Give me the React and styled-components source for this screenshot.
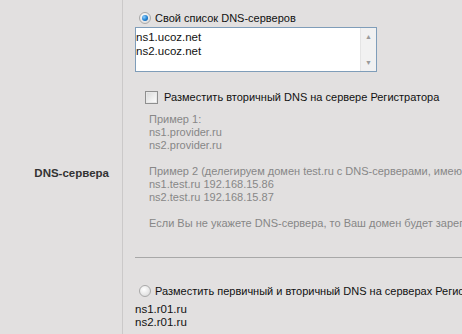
import React from 'react';
import styled, { createGlobalStyle } from 'styled-components';

const Global = createGlobalStyle`
    html, body {
        margin: 0;
        padding: 0;
        background: #e2e0e0;
        overflow: hidden;
    }
    body {
        font: 11px "Liberation Sans", Arial, sans-serif;
        color: #111;
    }
`;

const Row = styled.div`
    display: flex;
    width: 462px;
    height: 346px;
    white-space: nowrap;
`;

const LabelCell = styled.div`
    width: 123px;
    flex: none;
    display: flex;
    align-items: center;
    justify-content: flex-end;
    box-sizing: border-box;
    padding-right: 13px;
    border-right: 1px solid #cbc9c9;
    font-weight: bold;
    font-size: 11.5px;
    color: #333;
`;

const FieldCell = styled.div`
    flex: 1;
    min-width: 0;
    padding: 12px 0 0 12px;
    overflow: hidden;
    font-size: 11px;
`;

const Option = styled.label`
    display: flex;
    align-items: center;
    gap: ${p => p.$gap || 4}px;
    height: 12px;
    padding-left: ${p => p.$indent || 4}px;
    line-height: 12px;
`;

const Radio = styled.span`
    width: 12px;
    height: 12px;
    flex: none;
    box-sizing: border-box;
    border-radius: 50%;
    border: 1px solid #a9a9a9;
    background: radial-gradient(circle at 40% 35%, #fff 0%, #e6e6e6 60%, #cfcfcf 100%);
    display: flex;
    align-items: center;
    justify-content: center;

    &::after {
        content: '';
        display: ${p => (p.$checked ? 'block' : 'none')};
        width: 6px;
        height: 6px;
        border-radius: 50%;
        background: radial-gradient(circle at 35% 35%, #8fd0ff 0%, #1f7fd0 55%, #0b4f96 100%);
    }
`;

const Check = styled.span`
    width: 13px;
    height: 13px;
    flex: none;
    box-sizing: border-box;
    border: 1px solid #8f8f8f;
    background: linear-gradient(135deg, #d8d8d8 0%, #f4f4f4 70%, #fff 100%);
    box-shadow: inset 0 0 0 1px #e8e8e8;
`;

const ListBox = styled.div`
    display: flex;
    width: 242px;
    height: 45px;
    margin-top: 3px;
    box-sizing: border-box;
    border: 1px solid #7f9db9;
    background: #fff;
`;

const ListText = styled.div`
    flex: 1;
    padding: 2px 0 0 0;
    line-height: 14px;
    font-size: 11.5px;
`;

const Scroll = styled.div`
    width: 16px;
    flex: none;
    background: #f1f1f1;
    border-left: 1px solid #e4e4e4;
    display: flex;
    flex-direction: column;
    justify-content: space-between;
    align-items: center;
    padding: 5px 0 4px;
    box-sizing: border-box;
    color: #9a9a9a;
    font-size: 7px;
    line-height: 8px;
`;

const Hint = styled.div`
    margin: 10px 0 0 14px;
    color: #878787;
    line-height: 13px;
`;

const Gap = styled.div`
    height: 13px;
`;

const Rule = styled.hr`
    margin: 27px 0 0 0;
    border: none;
    border-top: 1px solid #a8a8a8;
    height: 0;
`;

const Plain = styled.div`
    margin-top: ${p => p.$top || 0}px;
    line-height: 13px;
    font-size: 11.5px;
`;

const ScrollUp = () => <span>▲</span>;
const ScrollDown = () => <span>▼</span>;

export default function App() {
    return (
        <>
            <Global />
            <Row>
                <LabelCell>DNS-сервера</LabelCell>
                <FieldCell>
                    <Option>
                        <Radio $checked />
                        <span>Свой список DNS-серверов</span>
                    </Option>
                    <ListBox>
                        <ListText>
                            ns1.ucoz.net<br />
                            ns2.ucoz.net
                        </ListText>
                        <Scroll>
                            <ScrollUp />
                            <ScrollDown />
                        </Scroll>
                    </ListBox>
                    <Option $indent={10} $gap={6} style={{ marginTop: 19 }}>
                        <Check />
                        <span>Разместить вторичный DNS на сервере Регистратора</span>
                    </Option>
                    <Hint>
                        Пример 1:<br />
                        ns1.provider.ru<br />
                        ns2.provider.ru
                        <Gap />
                        Пример 2 (делегируем домен test.ru с DNS-серверами, имеющими IP-адреса)<br />
                        ns1.test.ru 192.168.15.86<br />
                        ns2.test.ru 192.168.15.87
                        <Gap />
                        Если Вы не укажете DNS-сервера, то Ваш домен будет зарегистрирован без них
                    </Hint>
                    <Rule />
                    <Option style={{ marginTop: 27 }}>
                        <Radio />
                        <span>Разместить первичный и вторичный DNS на серверах Регистратора</span>
                    </Option>
                    <Plain $top={6}>
                        ns1.r01.ru<br />
                        ns2.r01.ru
                    </Plain>
                </FieldCell>
            </Row>
        </>
    );
}
